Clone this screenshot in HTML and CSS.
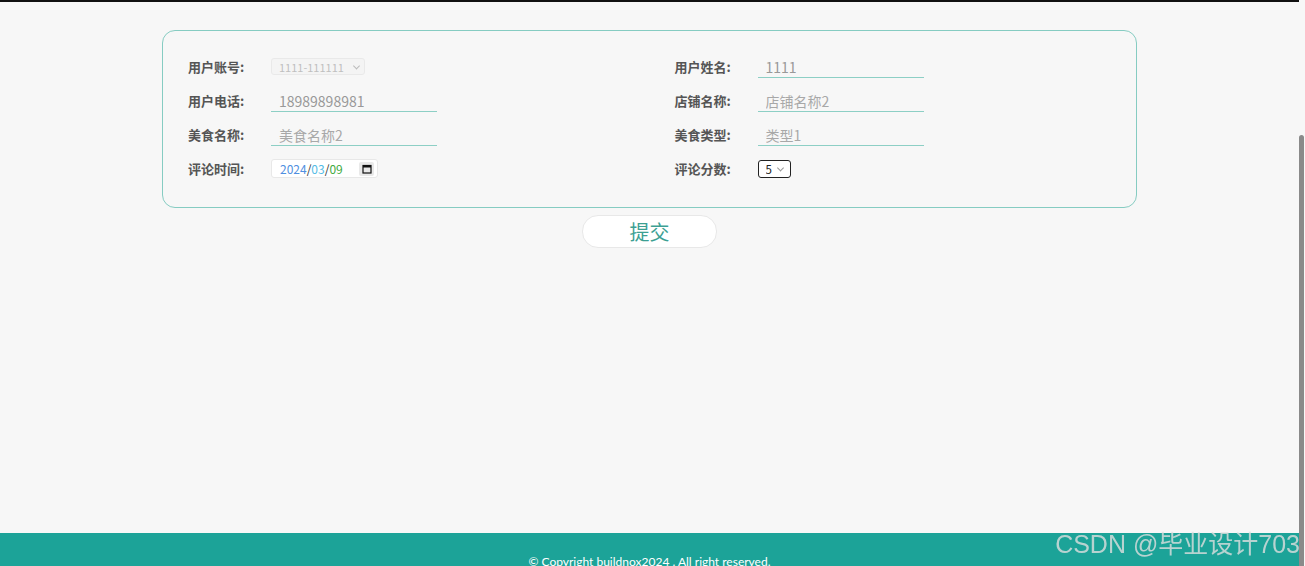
FILE: index.html
```html
<!DOCTYPE html>
<html lang="zh-CN">
<head>
    <meta charset="utf-8">
    <title>评论信息</title>
    <link rel="stylesheet" href="styles.css">
</head>
<body>

<div class="topBar"></div>

<div class="main">
    <!-- Comment form -->
    <form class="formCard">
        <div class="formItem">
            <label class="formLabel">用户账号:</label>
            <span class="selectWrap selectDisabled">
                <select class="formSelect" disabled>
                    <option>1111-111111</option>
                </select>
            </span>
        </div>
        <div class="formItem">
            <label class="formLabel">用户姓名:</label>
            <input class="formInput" value="1111" readonly>
        </div>
        <div class="formItem">
            <label class="formLabel">用户电话:</label>
            <input class="formInput" value="18989898981" readonly>
        </div>
        <div class="formItem">
            <label class="formLabel">店铺名称:</label>
            <input class="formInput" placeholder="店铺名称2">
        </div>
        <div class="formItem">
            <label class="formLabel">美食名称:</label>
            <input class="formInput" placeholder="美食名称2">
        </div>
        <div class="formItem">
            <label class="formLabel">美食类型:</label>
            <input class="formInput" placeholder="类型1">
        </div>
        <div class="formItem">
            <label class="formLabel">评论时间:</label>
            <!-- date picker field -->
            <span class="formDate">
                <span class="dateYear">2024</span>/<span class="dateMonth">03</span>/<span class="dateDay">09</span>
                <span class="dateIcon">
                    <svg width="10" height="10" viewBox="0 0 10 10">
                        <rect x="1" y="1.5" width="8" height="7.5" fill="none" stroke="#111" stroke-width="1.2"/>
                        <rect x="1" y="1.5" width="8" height="2" fill="#111"/>
                    </svg>
                </span>
            </span>
        </div>
        <div class="formItem">
            <label class="formLabel">评论分数:</label>
            <span class="selectWrap selectScore">
                <select class="formSelect">
                    <option>1</option>
                    <option>2</option>
                    <option>3</option>
                    <option>4</option>
                    <option selected>5</option>
                </select>
            </span>
        </div>
    </form>

    <div class="btnRow">
        <button class="submitBtn" type="button">提交</button>
    </div>
</div>

<div class="footer">© Copyright buildnox2024 . All right reserved.</div>

<div class="scrollThumb"></div>
<div class="watermark">CSDN @毕业设计703</div>

</body>
</html>
```

FILE: styles.css
```css
/* General Styles */
html {
    overflow: hidden;
}

body {
    margin: 0 6px 0 0;
    background-color: #f7f7f7;
    font-family: "Noto Sans CJK SC", "Noto Sans", sans-serif;
    color: #333;
}

.topBar {
    height: 2px;
    margin-right: -6px;
    background-color: #111;
}

.main {
    height: 531px;
    padding-top: 28px;
    box-sizing: border-box;
}

/* Form card */
.formCard {
    width: 975px;
    margin: 0 auto;
    padding: 18px 0 22px;
    box-sizing: border-box;
    border: 1px solid #86ccc2;
    border-radius: 13px;
    display: grid;
    grid-template-columns: 1fr 1fr;
    grid-auto-rows: 34px;
}

.formItem {
    display: flex;
    align-items: center;
    padding-left: 25px;
}

.formLabel {
    width: 83px;
    font-size: 13px;
    font-weight: bold;
    color: #555;
}

.formInput {
    width: 166px;
    height: 21px;
    padding: 0 0 0 8px;
    margin-top: 3px;
    box-sizing: border-box;
    border: none;
    border-bottom: 1px solid #8dcfc5;
    background: transparent;
    outline: none;
    font-family: inherit;
    font-size: 14px;
    color: #999;
}

.formInput::placeholder {
    color: #a8a8a8;
}

/* Selects */
.selectWrap {
    position: relative;
    display: inline-block;
    margin-top: 1px;
}

.selectWrap::after {
    content: "";
    position: absolute;
    top: 50%;
    width: 4px;
    height: 4px;
    border-right: 1px solid #aaa;
    border-bottom: 1px solid #aaa;
    transform: translateY(-70%) rotate(45deg);
    pointer-events: none;
}

.formSelect {
    appearance: none;
    -webkit-appearance: none;
    margin: 0;
    font-family: inherit;
    outline: none;
    display: block;
}

.selectDisabled .formSelect {
    width: 94px;
    height: 17px;
    padding: 0 14px 0 7px;
    border: 1px solid #e4e4e4;
    border-radius: 3px;
    background-color: #f4f4f4;
    font-size: 11px;
    color: #a8a8a8;
}

.selectDisabled::after {
    right: 6px;
    border-color: #bbb;
}

.selectScore .formSelect {
    width: 33px;
    height: 18px;
    padding: 0 0 0 7px;
    border: 1.5px solid #222;
    border-radius: 3px;
    background-color: #fff;
    font-size: 11.5px;
    color: #222;
}

.selectScore::after {
    right: 8px;
    border-color: #999;
}

/* Date */
.formDate {
    display: inline-flex;
    align-items: center;
    width: 107px;
    height: 19px;
    margin-top: 1px;
    padding: 0 2px 0 8px;
    box-sizing: border-box;
    border: 1px solid #e8e8e8;
    border-radius: 3px;
    background-color: #fff;
    font-size: 12px;
    color: #333;
}

.dateYear {
    color: #4f8fe0;
}

.dateMonth {
    color: #53bce6;
}

.dateDay {
    color: #3faa3f;
}

.dateIcon {
    display: flex;
    align-items: center;
    justify-content: center;
    width: 15px;
    height: 14px;
    margin-left: auto;
    margin-right: 1px;
    background-color: #e9e9e9;
    border-radius: 2px;
}

/* Submit Button */
.btnRow {
    display: flex;
    justify-content: center;
    margin-top: 7px;
}

.submitBtn {
    width: 135px;
    height: 33px;
    border: 1px solid #e8e8e8;
    border-radius: 16px;
    background-color: #fff;
    font-family: inherit;
    font-size: 20px;
    color: #3c9f93;
    cursor: pointer;
}

/* Footer */
.footer {
    height: 60px;
    padding-top: 21px;
    box-sizing: border-box;
    background-color: #1ca398;
    text-align: center;
    font-family: Lato, "Open Sans", sans-serif;
    font-size: 12px;
    color: #fff;
}

.scrollThumb {
    position: fixed;
    top: 135px;
    right: 1px;
    bottom: 0;
    width: 5px;
    background-color: #8a8a8a;
    border-radius: 3px 3px 0 0;
}

.watermark {
    position: fixed;
    right: 5px;
    bottom: 6px;
    font-family: "Liberation Sans", "Noto Sans CJK SC", sans-serif;
    font-size: 25px;
    color: rgba(222, 222, 222, 0.8);
    white-space: nowrap;
}
```
